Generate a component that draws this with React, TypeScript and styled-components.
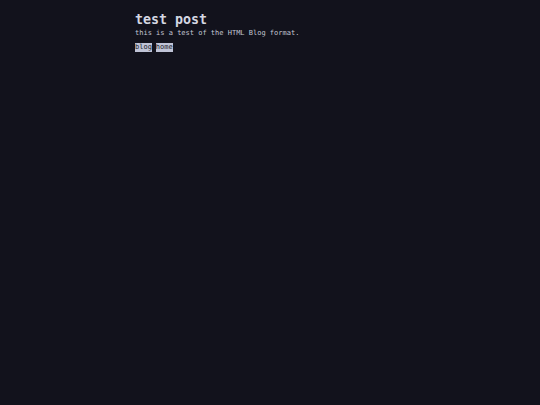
import React from "react";
import styled, { createGlobalStyle } from "styled-components";

const Global = createGlobalStyle`
  html, body { margin: 0; padding: 0; background: #12121c; }
  body { min-height: 405px; font-family: "DejaVu Sans Mono", "Liberation Mono", monospace; color: #c9cdd9; }
`;

const Page = styled.main`
  width: 270px;
  margin: 0 auto;
  padding-top: 11px;
`;

const Title = styled.h1`
  margin: 0;
  font-size: 13.3px;
  line-height: 17px;
  font-weight: bold;
  color: #d4d7e2;
`;

const Subtitle = styled.p`
  margin: 0;
  font-size: 7px;
  line-height: 10px;
  color: #c2c6d2;
`;

const Nav = styled.nav`
  display: flex;
  gap: 4px;
  margin-top: 5px;
`;

const NavLink = styled.a`
  font-size: 7px;
  line-height: 9px;
  background: #bfc3d6;
  color: #1a1b26;
  text-decoration: none;
`;

export default function App() {
  return (
    <>
      <Global />
      <Page>
        <Title>test post</Title>
        <Subtitle>this is a test of the HTML Blog format.</Subtitle>
        <Nav>
          <NavLink href="#">blog</NavLink>
          <NavLink href="#">home</NavLink>
        </Nav>
      </Page>
    </>
  );
}
